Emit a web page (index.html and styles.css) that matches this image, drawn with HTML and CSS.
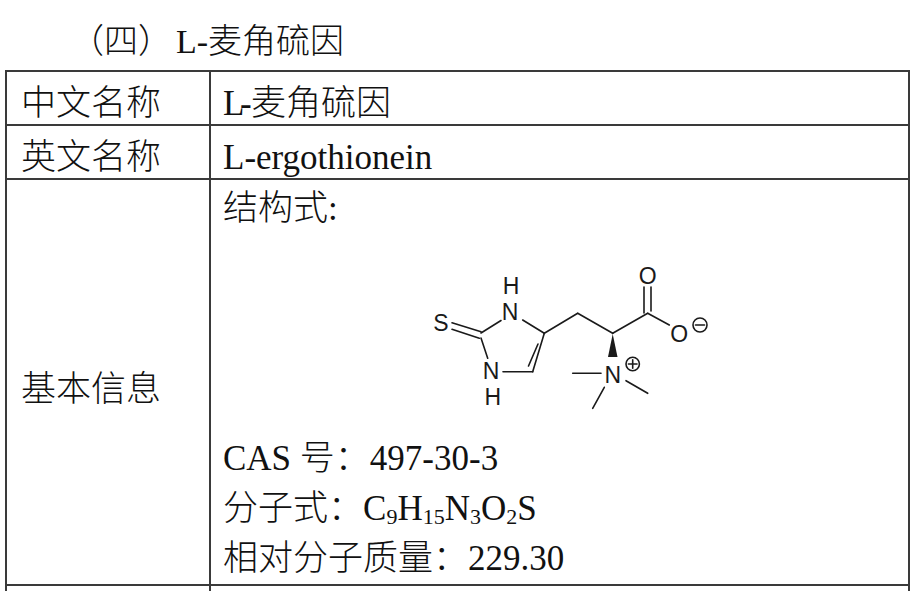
FILE: index.html
```html
<!DOCTYPE html>
<html lang="zh">
<head>
<meta charset="utf-8">
<title>L-麦角硫因</title>
<link rel="stylesheet" href="styles.css">
</head>
<body>
<h1 class="title"><span class="paren">（四）</span>L-麦角硫因</h1>
<table class="info">
  <colgroup><col class="c1"><col class="c2"></colgroup>
  <tr class="row">
    <td class="label">中文名称</td>
    <td class="value"><span class="tight">L-</span>麦角硫因</td>
  </tr>
  <tr class="row">
    <td class="label">英文名称</td>
    <td class="value">L-ergothionein</td>
  </tr>
  <tr class="row-info">
    <td class="label label-mid">基本信息</td>
    <td class="value-info">
      <div class="line">结构式:</div>
      <svg class="structure" width="290" height="200" viewBox="420 234 290 200" xmlns="http://www.w3.org/2000/svg">
        <g class="bonds" stroke="#1a1a1a" stroke-width="1.6" stroke-linecap="round" fill="none">
          <line x1="451" y1="322.7" x2="480" y2="331.7"/>
          <line x1="451" y1="329.3" x2="478.3" y2="338.3"/>
          <line x1="480" y1="333" x2="500" y2="320.5"/>
          <line x1="521.7" y1="320" x2="543.3" y2="333.3"/>
          <line x1="543.3" y1="333.3" x2="531.7" y2="371.7"/>
          <line x1="537" y1="344" x2="527.5" y2="366"/>
          <line x1="531.7" y1="371.7" x2="502" y2="371.7"/>
          <line x1="480" y1="338" x2="486.7" y2="358.3"/>
          <line x1="543.3" y1="333.3" x2="576.7" y2="313.3"/>
          <line x1="576.7" y1="313.3" x2="611.7" y2="333.3"/>
          <line x1="611.7" y1="333.3" x2="646.7" y2="313.3"/>
          <line x1="643" y1="313" x2="643" y2="287"/>
          <line x1="650" y1="311" x2="650" y2="287"/>
          <line x1="646.7" y1="313.3" x2="668.3" y2="325"/>
          <line x1="571.7" y1="373.3" x2="600" y2="373.3"/>
          <line x1="603.3" y1="387.3" x2="591.7" y2="408.3"/>
          <line x1="625" y1="380.7" x2="646.7" y2="393.3"/>
          <circle cx="699" cy="325" r="7"/>
          <line x1="694.5" y1="325" x2="703.5" y2="325"/>
          <circle cx="631.7" cy="364" r="6.7"/>
          <line x1="627.4" y1="364" x2="636" y2="364"/>
          <line x1="631.7" y1="359.7" x2="631.7" y2="368.3"/>
        </g>
        <polygon points="611.7,334 607,357 616.5,357" fill="#1a1a1a"/>
        <g class="atoms" fill="#1a1a1a" text-anchor="middle">
          <text x="440" y="331">S</text>
          <text x="510" y="294">H</text>
          <text x="509" y="320">N</text>
          <text x="490" y="379">N</text>
          <text x="491.7" y="405">H</text>
          <text x="646.7" y="283.5">O</text>
          <text x="678.3" y="342">O</text>
          <text x="611.7" y="382.5">N</text>
        </g>
      </svg>
      <div class="line">CAS 号：<span class="en">497-30-3</span></div>
      <div class="line">分子式：<span class="en">C<sub>9</sub>H<sub>15</sub>N<sub>3</sub>O<sub>2</sub>S</span></div>
      <div class="line">相对分子质量：<span class="en">229.30</span></div>
    </td>
  </tr>
  <tr class="row-next">
    <td class="label"></td>
    <td class="value"></td>
  </tr>
</table>
</body>
</html>
```

FILE: styles.css
```css
html {
  overflow: hidden;
}

body {
  margin: 0;
  background: #ffffff;
  color: #111111;
  font-family: "Liberation Serif", "Noto Sans CJK SC", serif;
  font-weight: 300;
}

.title {
  margin: 22px 0 8px 70px;
  font-size: 34px;
  line-height: 40px;
  font-weight: 300;
}

.paren {
  margin-right: 4px;
}

.en {
  font-family: "Liberation Serif", serif;
  font-weight: 400;
}

.tight {
  letter-spacing: -4.5px;
  margin-right: 4px;
}

.info {
  border-collapse: collapse;
  table-layout: fixed;
  width: 905px;
  margin-left: 5px;
}

.c1 {
  width: 204px;
}

.info td {
  border: 2px solid #3a3a3a;
  font-size: 35px;
  line-height: 35px;
  vertical-align: top;
  padding: 14px 12px 3px;
}

.info td.label {
  padding-left: 14px;
}

.info td.label-mid {
  vertical-align: middle;
  padding-top: 14px;
  padding-bottom: 0;
}

.info td.value-info {
  padding: 4px 12px 0;
}

.line {
  line-height: 50px;
  white-space: nowrap;
}

.line sub {
  font-size: 22px;
  line-height: 0;
  vertical-align: -4px;
}

.structure {
  display: block;
  margin-left: 198px;
}

.atoms {
  font-family: "Liberation Sans", "Noto Sans", sans-serif;
  font-size: 23px;
}

.row-next td {
  height: 60px;
}
```
